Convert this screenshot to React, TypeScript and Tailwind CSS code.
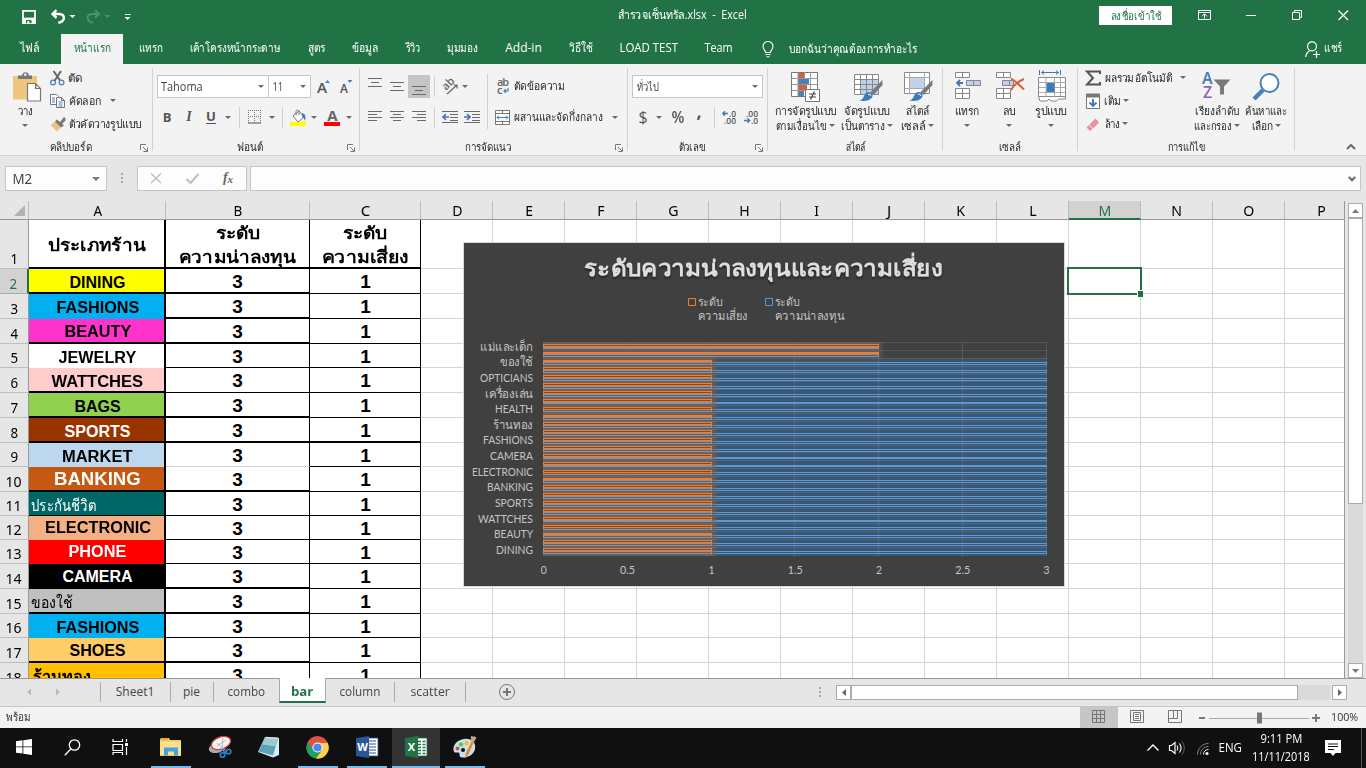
import { useLayoutEffect, useRef, useState, type ReactNode } from "react";

/* One line of text squeezed or stretched to a fixed width. */
function Fit({ w, className = "", children }: { w: number; className?: string; children: ReactNode }) {
  const ref = useRef<HTMLSpanElement>(null);
  const [scale, setScale] = useState(1);
  useLayoutEffect(() => {
    if (ref.current && ref.current.offsetWidth > 0) setScale(w / ref.current.offsetWidth);
  }, [w]);
  return (
    <span className={`inline-flex shrink-0 justify-center whitespace-nowrap ${className}`} style={{ width: w }}>
      <span ref={ref} className="shrink-0" style={{ transform: `scaleX(${scale})` }}>
        {children}
      </span>
    </span>
  );
}

const Caret = ({ className = "text-[#6a6a6a]" }: { className?: string }) => (
  <svg viewBox="0 0 6 3" className={`h-[3px] w-[6px] shrink-0 ${className}`}>
    <path d="M0 0h6L3 3z" fill="currentColor" />
  </svg>
);

const Cell = ({ className = "w-[22px]", children }: { className?: string; children: ReactNode }) => (
  <div className={`flex h-full shrink-0 items-center justify-center ${className}`}>{children}</div>
);

const Sep = ({ className = "h-[21px]" }: { className?: string }) => <div className={`w-px shrink-0 bg-[#d0d0d0] ${className}`} />;

function Lines({ rows }: { rows: [number, number][] }) {
  return (
    <svg viewBox="0 0 15 14" className="h-[14px] w-[15px]" shapeRendering="crispEdges">
      {rows.map(([x, w], i) => (
        <rect key={i} x={x} y={1 + i * (rows.length === 3 ? 4 : 3)} width={w} height="1" fill="#6a6a6a" />
      ))}
    </svg>
  );
}

/* ---------- title bar and tabs ---------- */

function TitleBar() {
  return (
    <div className="flex h-[34px] items-center text-white">
      <svg viewBox="0 0 135 34" className="h-[34px] w-[135px] shrink-0" fill="none">
        <path d="M23 10.800h12v12.200H23z" stroke="#fff" strokeWidth="1.800" />
        <path d="M23 17.600h12v5.400H23z" fill="#fff" />
        <path d="M26 20h5.500v3.200H26z" fill="#217346" />
        <path d="M27.300 21h2v2.500h-2z" fill="#fff" />
        <path d="M56.500 10.200 52.500 14l4 3.800M53 14h6.200c6.400.5 6.400 7.600-.9 8.800" stroke="#fff" strokeWidth="2.400" />
        <path d="M69.500 15h6l-3 3z" fill="#fff" />
        <path d="m95 10.200 4 3.800-4 3.800M98.500 14h-6.200c-6.400.5-6.400 7.600.9 8.800" stroke="#4f9070" strokeWidth="2" />
        <path d="M104.500 15h6l-3 3z" fill="#4f9070" />
        <path d="M125 14.500h5.500" stroke="#fff" />
        <path d="M124.500 17h6l-3 3z" fill="#fff" />
      </svg>
      <div className="mb-[4px] ml-[483px] flex h-[30px] items-center text-[12px]">
        <Fit w={129}>สำรวจเซ็นทรัล.xlsx&nbsp; -&nbsp; Excel</Fit>
      </div>
      <div className="mb-[3px] ml-[352px] flex h-[19px] w-[73px] items-center justify-center bg-white text-[11.500px] font-medium text-[#217346]">
        <Fit w={51}>ลงชื่อเข้าใช้</Fit>
      </div>
      <svg viewBox="1172 0 194 34" className="h-[34px] w-[194px] shrink-0" fill="none" stroke="#fff">
        <path d="M1198.500 10.500h12v9h-12zM1198.500 12.500h12M1204.500 18.500v-4.500m-2.500 2.300 2.500-2.500 2.500 2.500" />
        <path d="M1246 15.500h10" />
        <path d="M1292.500 12.500h7v7h-7zM1294.500 12.500v-2h7v7h-2" />
        <path d="m1338.500 10.500 9.500 9.500m0-9.500-9.500 9.500" strokeWidth="1.200" />
      </svg>
    </div>
  );
}

const TABS: [string, number][] = [
  ["แทรก", 24],
  ["เค้าโครงหน้ากระดาษ", 91],
  ["สูตร", 18],
  ["ข้อมูล", 26],
  ["รีวิว", 15],
  ["มุมมอง", 31],
  ["Add-in", 37],
  ["วิธีใช้", 24],
  ["LOAD TEST", 58],
  ["Team", 28],
];

function Tabs() {
  return (
    <div className="flex h-[30px] items-center text-[12px] text-white">
      <Fit w={19} className="mb-[2px] ml-[20px]">ไฟล์</Fit>
      <div className="ml-[22px] flex h-full w-[62px] items-center justify-center bg-[#f3f3f3] pb-[2px] font-medium text-[#217346]">
        <Fit w={37}>หน้าแรก</Fit>
      </div>
      <div className="mb-[2px] ml-[15px] flex gap-[27px]">
        {TABS.map(([name, w]) => (
          <Fit key={name} w={w}>{name}</Fit>
        ))}
      </div>
      <svg viewBox="0 0 12 17" className="ml-[29px] h-[17px] w-[12px] shrink-0" fill="none" stroke="#fff" strokeWidth="1.100">
        <path d="M3.500 11.500C3.500 9 1 8.500 1 5.500a5 5 0 0 1 10 0c0 3-2.500 3.500-2.500 6zM3.500 13.500h5M4.500 15.800h3" />
      </svg>
      <Fit w={129} className="ml-[14px]">บอกฉันว่าคุณต้องการทำอะไร</Fit>
      <svg viewBox="0 0 15 17" className="ml-[388px] h-[17px] w-[15px] shrink-0" fill="none" stroke="#fff" strokeWidth="1.200">
        <circle cx="7" cy="5.300" r="4.500" />
        <path d="M.7 16c.3-3 1.700-5 4-6.300M8 13.500h7M11.500 10v7" />
      </svg>
      <Fit w={18} className="mb-[2px] ml-[4px]">แชร์</Fit>
    </div>
  );
}

/* ---------- ribbon ---------- */

function Group({ className, label, labelW, launcher, children }: { className: string; label: string; labelW: number; launcher?: boolean; children: ReactNode }) {
  return (
    <div className={`flex shrink-0 ${className}`}>
      <div className="flex min-w-0 flex-1 flex-col">
        <div className="flex h-[75px]">{children}</div>
        <div className="flex h-[16px] items-center">
          <div className="flex flex-1 justify-center">
            <Fit w={labelW}>{label}</Fit>
          </div>
          {launcher && (
            <svg viewBox="0 0 8 8" className="mr-[4px] mt-[2px] h-[8px] w-[8px] shrink-0" fill="none" stroke="#777">
              <path d="M.5 6V.5H6M3 3l4 4M7.500 3.500v4h-4" />
            </svg>
          )}
        </div>
      </div>
      <div className="mt-[4px] h-[83px] w-px bg-[#d2d2d2]" />
    </div>
  );
}

function BigButton({ className, icon, line1, w1, line2, w2 }: { className: string; icon: ReactNode; line1: string; w1: number; line2?: string; w2?: number }) {
  return (
    <div className={`flex shrink-0 flex-col items-center pt-[6px] ${className}`}>
      <div className="flex h-[33px] items-center justify-center">{icon}</div>
      <div className="flex h-[15px] items-center">
        <Fit w={w1}>{line1}</Fit>
      </div>
      <div className="flex h-[15px] items-center gap-[2px]">
        {line2 && <Fit w={w2 ?? 0}>{line2}</Fit>}
        <Caret />
      </div>
    </div>
  );
}

const Brush = () => (
  <g>
    <path d="M28.500 9v5l-9 10-3-3z" fill="#7a7a7a" />
    <path d="M5 29.500c6-1 4-7.500 9.500-8.500 3-.5 5 3 3.500 5.500-2.500 3.500-8 4-13 3z" fill="#3f7ab8" />
    <path d="M14 23.500c2-1 3 .5 2.500 1.500" stroke="#fff" fill="none" />
  </g>
);

function Ribbon() {
  return (
    <div className="flex h-[92px] border-b border-[#d2d2d2] bg-[#f3f3f3] text-[11.500px] leading-none text-[#262626]">
      <Group className="w-[153px]" label="คลิปบอร์ด" labelW={42} launcher>
        <div className="flex w-[50px] flex-col items-center pt-[7px]">
          <svg viewBox="0 0 30 32" className="ml-[4px] h-[32px] w-[30px]">
            <path d="M1 5h24v23.500H1z" fill="#eec77c" />
            <path d="M6 8V4.500h4C10.500 0 16.500 0 17 4.500h3V8z" fill="#777" />
            <circle cx="13.300" cy="3.800" r="1.200" fill="#fff" />
            <path d="M15.500 12.500h8l5 5v12.500h-13zM23.500 12.500v5h5" fill="#fff" stroke="#777" strokeWidth="1.200" />
          </svg>
          <div className="flex h-[15px] items-center">
            <Fit w={15}>วาง</Fit>
          </div>
          <div className="flex h-[15px] items-center">
            <Caret />
          </div>
        </div>
        <div className="flex flex-col pt-[2px]">
          <div className="flex h-[23px] items-center">
            <svg viewBox="0 0 16 16" className="h-[16px] w-[16px]" fill="none">
              <path d="m3.500 1 7 10M11 1 4.500 11" stroke="#666" strokeWidth="2" />
              <circle cx="3" cy="12.500" r="2.400" stroke="#4a80b8" strokeWidth="1.200" />
              <circle cx="11.500" cy="12.500" r="2.400" stroke="#4a80b8" strokeWidth="1.200" />
            </svg>
            <Fit w={14} className="ml-[2px]">ตัด</Fit>
          </div>
          <div className="flex h-[23px] items-center">
            <svg viewBox="0 0 16 16" className="h-[16px] w-[16px]" fill="#fff" stroke="#777">
              <path d="M.5 1.500h6l2 2v8h-8z" />
              <path d="M6.500 4.500h5l3 3v7h-8zM11.500 4.500v3h3" />
              <path d="M2 5h3M2 7h3M2 9h3M8.500 9h4M8.500 11h4M8.500 13h4" stroke="#4a80b8" />
            </svg>
            <Fit w={33} className="ml-[2px]">คัดลอก</Fit>
            <div className="ml-[9px]"><Caret /></div>
          </div>
          <div className="flex h-[23px] items-center">
            <svg viewBox="0 0 16 16" className="h-[16px] w-[16px]">
              <path d="M.5 9 5 5.500l6 5.500-4 4.500z" fill="#eec08a" />
              <path d="m5 5.500 2-2 7 6-3 2z" fill="#777" />
              <path d="M9 7.500 14 1l1.500 1.500v2L11 9z" fill="#777" />
            </svg>
            <Fit w={73} className="ml-[2px]">ตัวคัดวางรูปแบบ</Fit>
          </div>
        </div>
      </Group>

      <Group className="w-[207px]" label="ฟอนต์" labelW={26} launcher>
        <div className="flex flex-col gap-[8px] pl-[4px] pt-[11px] text-[#444]">
          <div className="flex h-[23px] items-center">
            <div className="flex h-full w-[112px] items-center justify-between border border-[#c6c6c6] bg-white pl-[3px] pr-[4px] text-[12px]">
              <Fit w={42}>Tahoma</Fit>
              <Caret />
            </div>
            <div className="-ml-px flex h-full w-[43px] items-center justify-between border border-[#c6c6c6] bg-white pl-[3px] pr-[4px] text-[12px]">
              <Fit w={11} className="text-[#4b3f5c]">11</Fit>
              <Caret />
            </div>
            <svg viewBox="0 0 38 18" className="ml-[6px] h-[18px] w-[38px] overflow-visible">
              <text x="0" y="14.500" textLength="10" lengthAdjust="spacingAndGlyphs" className="text-[14px] font-semibold" fill="#555">A</text>
              <path d="M8 5h5l-2.500-3z" fill="#4a80b8" />
              <text x="23" y="14.500" className="text-[12px] font-semibold" fill="#555">A</text>
              <path d="M30.500 2h5l-2.500 3z" fill="#4a80b8" />
            </svg>
          </div>
          <div className="-ml-px flex h-[22px] items-center text-[13px] font-bold text-[#555]">
            <Cell>B</Cell>
            <Cell><i className="font-['Liberation_Serif'] text-[14px]">I</i></Cell>
            <Cell><span className="border-b border-[#555] pb-px leading-[11px]">U</span></Cell>
            <Cell className="w-[12px]"><Caret /></Cell>
            <Sep className="ml-[5px] h-[21px]" />
            <Cell className="ml-[2px] w-[25px]">
              <svg viewBox="0 0 13 14" className="h-[14px] w-[13px]" fill="none" stroke="#777">
                <path d="M0 .5h13M0 6.500h13M.5 0v13M6.500 0v13M12.500 0v13" strokeDasharray="1 1" />
                <path d="M0 13h13" stroke="#555" />
              </svg>
            </Cell>
            <Cell className="w-[9px]"><Caret /></Cell>
            <Sep className="ml-[6px] h-[21px]" />
            <Cell className="ml-[3px] w-[24px]">
              <svg viewBox="0 0 17 17" className="h-[17px] w-[17px]">
                <path d="m3 7 6-5 5 6-6 5z" fill="#fff" stroke="#777" />
                <path d="M6 6V2.500c0-2 3-2 3 0V6" fill="none" stroke="#777" />
                <path d="M12 4c4 1 4 4 3 8-1-3-2-3.500-3-4z" fill="#4a80b8" />
                <path d="M0 13h16v4H0z" fill="#ff0" />
              </svg>
            </Cell>
            <Cell className="w-[8px]"><Caret /></Cell>
            <Cell className="ml-[2px] w-[24px]">
              <svg viewBox="0 0 17 17" className="h-[17px] w-[17px] overflow-visible">
                <text x="8.500" y="12" textAnchor="middle" className="text-[15px] font-bold" fill="#666">A</text>
                <path d="M0 13h16v4H0z" fill="red" />
              </svg>
            </Cell>
            <Cell className="w-[9px]"><Caret /></Cell>
          </div>
        </div>
      </Group>

      <Group className="w-[268px]" label="การจัดแนว" labelW={46} launcher>
        <div className="flex w-[127px] flex-col gap-[8px] pl-[4px] pt-[11px]">
          <div className="flex h-[23px] items-center">
            <Cell><div className="mb-[5px]"><Lines rows={[[0, 14], [3, 8], [0, 14]]} /></div></Cell>
            <Cell><div className="mt-[3px]"><Lines rows={[[0, 14], [3, 8], [0, 14]]} /></div></Cell>
            <Cell className="w-[22px] bg-[#c5c5c5]"><div className="mt-[11px]"><Lines rows={[[0, 14], [3, 8], [0, 14]]} /></div></Cell>
            <Sep className="ml-[4px] h-[21px]" />
            <Cell className="ml-[3px] w-[23px]">
              <svg viewBox="0 0 18 17" className="h-[17px] w-[18px] overflow-visible">
                <text transform="translate(5 13) rotate(-45)" className="text-[11px] font-semibold" fill="#666">ab</text>
                <path d="m6 16 10-9M12.500 7H16v3.500" fill="none" stroke="#666" strokeWidth="1.200" />
              </svg>
            </Cell>
            <Cell className="w-[8px]"><Caret /></Cell>
          </div>
          <div className="flex h-[22px] items-center">
            <Cell><Lines rows={[[0, 14], [0, 9], [0, 14], [0, 9]]} /></Cell>
            <Cell><Lines rows={[[0, 14], [3, 8], [0, 14], [3, 8]]} /></Cell>
            <Cell><Lines rows={[[0, 14], [5, 9], [0, 14], [5, 9]]} /></Cell>
            <Sep className="ml-[4px] h-[21px]" />
            <Cell className="ml-[3px] w-[23px]">
              <svg viewBox="0 0 16 14" className="h-[14px] w-[16px]" fill="none" stroke="#6a6a6a">
                <path d="M0 1.500h16M8 4.500h8M8 7.500h8M8 10.500h8M0 12.500h16" />
                <path d="M7 7H1.500M4 4l-3 3 3 3" stroke="#3f7ab8" strokeWidth="1.700" />
              </svg>
            </Cell>
            <Cell>
              <svg viewBox="0 0 16 14" className="h-[14px] w-[16px]" fill="none" stroke="#6a6a6a">
                <path d="M0 1.500h16M8 4.500h8M8 7.500h8M8 10.500h8M0 12.500h16" />
                <path d="M0 7h5.500M3 4l3 3-3 3" stroke="#3f7ab8" strokeWidth="1.700" />
              </svg>
            </Cell>
          </div>
        </div>
        <Sep className="mt-[10px] h-[55px]" />
        <div className="flex flex-col gap-[8px] pl-[5px] pt-[11px]">
          <div className="flex h-[23px] items-center">
            <Cell className="w-[20px]">
              <svg viewBox="0 0 14 17" className="h-[17px] w-[14px] overflow-visible">
                <text x="1" y="8" className="text-[11px] font-semibold" fill="#666" textLength="12">ab</text>
                <text x="1" y="16" className="text-[11px] font-semibold" fill="#666">c</text>
                <path d="M12 10v3H8M9.800 11.200 8 13l1.800 1.800" fill="none" stroke="#3f7ab8" strokeWidth="1.200" />
              </svg>
            </Cell>
            <Fit w={51} className="mb-[2px] ml-px">ตัดข้อความ</Fit>
          </div>
          <div className="flex h-[22px] items-center">
            <Cell className="w-[20px]">
              <svg viewBox="0 0 15 15" className="mr-px h-[15px] w-[15px]" fill="none" stroke="#777">
                <path d="M.5.5h14v14H.500zM.5 3.500h14M.5 11.500h14M7.500.5v3M7.500 11.500v3" fill="#fff" />
                <path d="M2 7.500h11M4 5.500l-2 2 2 2M11 5.500l2 2-2 2" stroke="#3f7ab8" />
              </svg>
            </Cell>
            <Fit w={89} className="ml-px">ผสานและจัดกึ่งกลาง</Fit>
            <div className="ml-[9px]"><Caret /></div>
          </div>
        </div>
      </Group>

      <Group className="w-[140px]" label="ตัวเลข" labelW={27} launcher>
        <div className="flex flex-col gap-[8px] pl-[4px] pt-[11px] text-[#444]">
          <div className="flex h-[23px] w-[131px] items-center justify-between border border-[#c6c6c6] bg-white pl-[3px] pr-[4px]">
            <Fit w={22}>ทั่วไป</Fit>
            <Caret />
          </div>
          <div className="flex h-[22px] items-center text-[16px] text-[#555]">
            <Cell>$</Cell>
            <Cell className="w-[10px]"><Caret /></Cell>
            <Cell className="ml-[3px] w-[22px]"><Fit w={13} className="font-semibold">%</Fit></Cell>
            <Cell className="w-[20px]"><span className="mb-[13px] text-[18px] font-bold">,</span></Cell>
            <Sep className="ml-[5px] h-[21px]" />
            <Cell className="ml-[3px] w-[22px]">
              <svg viewBox="0 0 15 14" className="h-[14px] w-[15px] overflow-visible">
                <text x="7" y="6.500" textLength="7" className="text-[8.500px] font-semibold" fill="#555">.0</text>
                <text x="2" y="14" textLength="12" className="text-[8.500px] font-semibold" fill="#555">.00</text>
                <path d="M6 3.500H1M3 1.200.800 3.500 3 5.800" fill="none" stroke="#3f7ab8" strokeWidth="1.400" />
              </svg>
            </Cell>
            <Cell className="w-[23px]">
              <svg viewBox="0 0 15 14" className="h-[14px] w-[15px] overflow-visible">
                <text x="2" y="6.500" textLength="12" className="text-[8.500px] font-semibold" fill="#555">.00</text>
                <text x="7" y="14" textLength="7" className="text-[8.500px] font-semibold" fill="#555">.0</text>
                <path d="M0 10.500h5M3.500 8.200l2.200 2.300-2.200 2.300" fill="none" stroke="#3f7ab8" strokeWidth="1.400" />
              </svg>
            </Cell>
          </div>
        </div>
      </Group>

      <Group className="w-[175px]" label="สไตล์" labelW={20}>
        <BigButton
          className="ml-[4px] w-[66px]"
          line1="การจัดรูปแบบ" w1={62} line2="ตามเงื่อนไข" w2={51}
          icon={
            <svg viewBox="0 0 30 31" className="h-[31px] w-[30px]" fill="#fff" stroke="#777">
              <path d="M1.500 1.500h26v24h-26z" />
              <path d="M8 2h6v5H8zM8 14h9v5H8z" fill="#d35f3b" stroke="none" />
              <path d="M8 8h11v5H8zM8 20h6v5H8z" fill="#4a80b8" stroke="none" />
              <path d="M1.500 7.500h26M1.500 13.500h26M1.500 19.500h26M8 1v24M20.500 1v24M14.500 1v6" fill="none" stroke="#999" />
              <path d="M15.500 18.500h14v12h-14z" />
              <path d="M19 23h7M19 26h7M24.500 20.500l-4 8" stroke="#444" strokeWidth="1.200" />
            </svg>
          }
        />
        <BigButton
          className="w-[58px]"
          line1="จัดรูปแบบ" w1={46} line2="เป็นตาราง" w2={44}
          icon={
            <svg viewBox="0 0 30 31" className="ml-[4px] h-[31px] w-[30px]" fill="none" stroke="#888">
              <path d="M.5 3.500h24v20H.5z" fill="#fff" />
              <path d="M7 9h17v14H7z" fill="#bfd2ea" stroke="none" />
              <path d="M.5 8.500h24M.5 13.500h24M.5 18.500h24M6.500 3.500v20M12.500 3.500v20M18.500 3.500v20" />
              <g stroke="none"><Brush /></g>
            </svg>
          }
        />
        <BigButton
          className="w-[42px]"
          line1="สไตล์" w1={24} line2="เซลล์" w2={25}
          icon={
            <svg viewBox="0 0 30 31" className="ml-[4px] h-[31px] w-[30px]" fill="none" stroke="#888">
              <path d="M.5 1.500h25v21H.5z" fill="#fff" />
              <path d="M.5 6.500h25M.5 17.500h25M5.500 1.500v21M20.500 1.500v21" stroke="#aaa" />
              <path d="M6 7h14v10H6z" fill="#bfd2ea" stroke="none" />
              <g stroke="none"><Brush /></g>
            </svg>
          }
        />
      </Group>

      <Group className="w-[135px]" label="เซลล์" labelW={22}>
        <BigButton
          className="ml-[3px] w-[42px]"
          line1="แทรก" w1={25}
          icon={
            <svg viewBox="0 0 26 29" className="mb-[2px] ml-[2px] h-[29px] w-[26px]" fill="#fff" stroke="#888">
              <path d="M.5 1.500h14v5H.5zM7.500 1.500v5" />
              <path d="M11.500 9.500h14v5h-14zM18.500 9.500v5" fill="#bfd2ea" />
              <path d="M.5 17.500h14v10H.5zM.5 22.500h14M7.500 17.500v10" />
              <path d="M8 12H2M5 9l-3 3 3 3" fill="none" stroke="#3f7ab8" strokeWidth="1.800" />
            </svg>
          }
        />
        <BigButton
          className="w-[42px]"
          line1="ลบ" w1={13}
          icon={
            <svg viewBox="0 0 30 29" className="mb-[2px] ml-[3px] h-[29px] w-[30px]" fill="#fff" stroke="#888">
              <path d="M.5 1.500h14v5H.5zM7.500 1.500v5" />
              <path d="M6.500 9.500h11v5h-11zM13.500 9.500v5" fill="#bfd2ea" />
              <path d="M.5 17.500h14v10H.5zM.5 22.500h14M7.500 17.500v10" />
              <path d="M15 7.500c5 3 9 7 13 11M28 8c-5 2-10 6-13 11" fill="none" stroke="#d9603b" strokeWidth="2" />
            </svg>
          }
        />
        <BigButton
          className="w-[42px]"
          line1="รูปแบบ" w1={32}
          icon={
            <svg viewBox="0 0 29 32" className="mb-px ml-[3px] h-[32px] w-[29px]" fill="#fff" stroke="#888">
              <path d="M.5 7.500h27v19H.500zM.5 26.500h27v2.500l-7 0-2 2H13l-2-2-2 2H2z" />
              <path d="M.5 12.500h27M.5 22.500h27M8 7.500v19M16.500 7.500v19M22.500 7.500v19M.5 17.500H8M16.500 17.500h11" fill="none" stroke="#aaa" />
              <path d="M8.500 13h8v9h-8z" fill="#3f7ab8" stroke="none" />
              <path d="M1.500 0v5M22.500 0v5M3.500 2.500h17M6 .5l-2.500 2L6 4.500M18 .5l2.500 2-2.500 2" fill="none" stroke="#3f7ab8" />
            </svg>
          }
        />
      </Group>

      <Group className="w-[217px]" label="การแก้ไข" labelW={38}>
        <div className="flex w-[114px] flex-col pl-[7px] pt-[2px]">
          <div className="flex h-[23px] items-center">
            <svg viewBox="0 0 16 16" className="h-[16px] w-[16px]">
              <path d="M15 4V1.500H2L8 8l-6 6.500h13V12" fill="none" stroke="#555" strokeWidth="2" />
            </svg>
            <Fit w={68} className="ml-[3px]">ผลรวมอัตโนมัติ</Fit>
            <div className="ml-[8px]"><Caret /></div>
          </div>
          <div className="flex h-[23px] items-center">
            <svg viewBox="0 0 16 16" className="h-[16px] w-[16px]" fill="#fff" stroke="#777">
              <path d="M1.500 1.500h13v14h-13z" />
              <path d="M1.500 1h13v3h-13z" fill="#777" />
              <path d="M8 6v7M4.500 9.500 8 13l3.500-3.500" fill="none" stroke="#3f7ab8" strokeWidth="1.900" />
            </svg>
            <Fit w={17} className="ml-[3px]">เติม</Fit>
            <div className="ml-[2px]"><Caret /></div>
          </div>
          <div className="flex h-[23px] items-center">
            <svg viewBox="0 0 16 16" className="h-[16px] w-[16px]">
              <path d="m4.500 8.500 6-6 3.500 4-6 6z" fill="#e8909f" />
              <path d="M1.500 11.500 4 9l3.500 4-2.500 2z" fill="#e8909f" />
            </svg>
            <Fit w={16} className="ml-[3px]">ล้าง</Fit>
            <div className="ml-[2px]"><Caret /></div>
          </div>
        </div>
        <BigButton
          className="w-[50px]"
          line1="เรียงลำดับ" w1={44} line2="และกรอง" w2={38}
          icon={
            <svg viewBox="0 0 30 31" className="h-[31px] w-[30px] overflow-visible">
              <text x="0" y="13" className="text-[16px] font-semibold" fill="#3f7ab8">A</text>
              <text x="1" y="27" className="text-[16px] font-semibold" fill="#9162b8">Z</text>
              <path d="M11.500 8.500h17l-6.500 7v8h-4v-8z" fill="#7a7a7a" />
            </svg>
          }
        />
        <BigButton
          className="w-[48px]"
          line1="ค้นหาและ" w1={42} line2="เลือก" w2={22}
          icon={
            <svg viewBox="0 0 28 30" className="mr-px h-[30px] w-[28px]">
              <path d="m2 27 9-9" stroke="#4a80b8" strokeWidth="4.500" />
              <circle cx="17.500" cy="11" r="9" fill="#fff" stroke="#4a80b8" strokeWidth="2" />
            </svg>
          }
        />
      </Group>
      <div className="flex flex-1 items-end justify-end pb-[5px] pr-[10px]">
        <svg viewBox="0 0 10 6" className="h-[6px] w-[10px]" fill="none" stroke="#6a6a6a" strokeWidth="2">
          <path d="m1 5 4-4 4 4" />
        </svg>
      </div>
    </div>
  );
}

/* ---------- formula bar ---------- */

function FormulaBar() {
  return (
    <div className="flex h-[45px] bg-[#e6e6e6] pl-[5px] pt-[10px]">
      <div className="flex h-[25px] w-[102px] items-center justify-between border border-[#c6c6c6] bg-[#fdfdfd] pl-[6px] pr-[6px] font-['Noto_Sans'] text-[14px] text-[#444]">
        <Fit w={20}>M2</Fit>
        <svg viewBox="0 0 8 4" className="h-[4px] w-[8px]"><path d="M0 0h8L4 4z" fill="#777" /></svg>
      </div>
      <div className="ml-[14px] mt-[7px] flex flex-col gap-[2px]">
        <div className="h-[2px] w-[2px] bg-[#aaa]" />
        <div className="h-[2px] w-[2px] bg-[#aaa]" />
        <div className="h-[2px] w-[2px] bg-[#aaa]" />
      </div>
      <div className="ml-[14px] flex h-[25px] w-[110px] items-center border border-[#c6c6c6] bg-[#fdfdfd]">
        <svg viewBox="0 0 108 23" className="h-[23px] w-[108px]" fill="none">
          <path d="m13 6.500 10 9.500M23 6.500 13 16" stroke="#c0c0c0" strokeWidth="1.600" />
          <path d="m48.500 12 4 4 8-9" stroke="#c0c0c0" strokeWidth="2.200" />
          <text x="85" y="15" className="font-['Liberation_Serif'] text-[14px] font-bold italic" fill="#666">f</text>
          <text x="89.500" y="15.500" className="font-['Liberation_Serif'] text-[11px] font-bold italic" fill="#666">x</text>
        </svg>
      </div>
      <div className="ml-[3px] flex h-[25px] w-[1111px] items-center justify-end border border-[#c6c6c6] bg-[#fdfdfd] pr-[4px]">
        <svg viewBox="0 0 8 6" className="h-[6px] w-[8px]" fill="none" stroke="#6a6a6a" strokeWidth="2.200">
          <path d="m.8 1 3.200 3.200L7.200 1" />
        </svg>
      </div>
    </div>
  );
}

/* ---------- worksheet ---------- */

type Row = {
  h: string;
  a: string;
  w: number;
  fill: string;
  b?: string;
  c?: string;
};

const THIN = "border-b border-b-black";
const THICK = "border-b-2 border-b-black";

const ROWS: Row[] = [
  { h: "h-[25px]", a: "DINING", w: 56, fill: `bg-[#ffff00] pt-[4px] ${THICK}`, b: THICK },
  { h: "h-[25px]", a: "FASHIONS", w: 83, fill: "bg-[#00b0f0] pt-[3px]", b: THICK },
  { h: "h-[25px]", a: "BEAUTY", w: 67, fill: `bg-[#ff33cc] pt-[3px] ${THICK}`, b: THICK },
  { h: "h-[24px]", a: "JEWELRY", w: 78, fill: "bg-white pt-[3px]" },
  { h: "h-[25px]", a: "WATTCHES", w: 92, fill: `bg-[#ffcccc] pt-[4px] ${THICK}` },
  { h: "h-[25px]", a: "BAGS", w: 46, fill: `bg-[#92d050] pt-[4px] ${THICK}`, b: THICK },
  { h: "h-[25px]", a: "SPORTS", w: 66, fill: `bg-[#993300] pt-[4px] text-white ${THICK}`, b: THICK, c: THICK },
  { h: "h-[24px]", a: "MARKET", w: 70, fill: "bg-[#bdd7ee] pt-[3px]", b: "border-b border-b-[#d4d4d4]" },
  { h: "h-[25px]", a: "BANKING", w: 87, fill: `bg-[#c65911] text-[19px] text-white ${THICK}`, b: THICK },
  { h: "h-[24px]", a: "ประกันชีวิต", w: 65, fill: `justify-start! pl-[2px] pt-[5px] bg-[#006666] font-normal! text-[15px] text-white ${THIN}` },
  { h: "h-[24px]", a: "ELECTRONIC", w: 106, fill: "bg-[#f4b084]" },
  { h: "h-[24px]", a: "PHONE", w: 58, fill: "bg-[#ff0000] text-white" },
  { h: "h-[25px]", a: "CAMERA", w: 70, fill: "bg-black text-white", b: THICK },
  { h: "h-[25px]", a: "ของใช้", w: 42, fill: `justify-start! pl-[2px] pt-[4px] bg-[#c0c0c0] font-normal! text-[15px] ${THICK}`, b: THICK },
  { h: "h-[24px]", a: "FASHIONS", w: 83, fill: "bg-[#00b0f0] pt-[3px]" },
  { h: "h-[25px]", a: "SHOES", w: 56, fill: `bg-[#ffcc66] pt-[3px] ${THICK}`, b: THICK },
  { h: "h-[25px]", a: "ร้านทอง", w: 59, fill: "justify-start! pl-[3px] pt-[3px] bg-[#ffc000]" },
];

const COLS = ["D", "E", "F", "G", "H", "I", "J", "K", "L", "M", "N", "O", "P"];

function Blank() {
  return (
    <>
      {COLS.map((c) => (
        <div key={c} className={`shrink-0 border-b border-[#d4d4d4] ${c === "P" ? "w-[60px]" : "w-[72px] border-r"}`} />
      ))}
    </>
  );
}

function RowHead({ n, active }: { n: number; active?: boolean }) {
  return (
    <div
      className={`flex w-[29px] shrink-0 items-end justify-center border-b font-['Noto_Sans'] text-[15px] font-normal leading-[20px] ${
        active ? "border-b-[#ababab] border-r-2 border-r-[#217346] bg-[#d2d2d2] text-[#217346]" : "border-b-[#bdbdbd] border-r border-r-[#999] bg-[#e6e6e6] text-black"
      }`}
    >
      <Fit w={n > 9 ? 16 : 8}>{n}</Fit>
    </div>
  );
}

function Sheet() {
  return (
    <div className="flex h-[477px] bg-[#e6e6e6]">
      <div className="relative flex w-[1345px] shrink-0 flex-col overflow-hidden border-r border-[#999]">
        <div className="flex h-[19px] shrink-0 border-b border-[#999] bg-[#e6e6e6] font-['Noto_Sans'] text-[15px] leading-none text-black">
          <div className="flex w-[29px] shrink-0 items-end justify-end border-r border-[#bbb] pb-[3px] pr-[3px]">
            <svg viewBox="0 0 11 11" className="h-[11px] w-[11px]"><path d="M11 0v11H0z" fill="#b2b2b2" /></svg>
          </div>
          <div className="flex w-[137px] shrink-0 items-center justify-center border-r border-[#bbb] pl-px"><Fit w={9}>A</Fit></div>
          <div className="flex w-[144px] shrink-0 items-center justify-center border-r border-[#bbb] pl-px"><Fit w={9}>B</Fit></div>
          <div className="flex w-[111px] shrink-0 items-center justify-center border-r border-[#bbb] pl-px"><Fit w={9}>C</Fit></div>
          {COLS.map((c) => (
            <div
              key={c}
              className={`flex w-[72px] shrink-0 items-center justify-center pl-px ${
                c === "M" ? "h-[19px] border-b-2 border-r border-b-[#217346] border-r-[#bbb] bg-[#d2d2d2] pt-px text-[#217346]" : c === "P" ? "" : "border-r border-[#bbb]"
              }`}
            >
              <span className={c === "J" ? "" : "scale-x-[.94]"}>{c}</span>
            </div>
          ))}
        </div>

        <div className="flex h-[49px] shrink-0 bg-white">
          <RowHead n={1} />
          <div className="flex w-[137px] shrink-0 items-center justify-center border-b-2 border-r-2 border-black pl-px pt-[2px] font-['Noto_Sans'] text-[17px] font-bold leading-none">
            <Fit w={98}>ประเภทร้าน</Fit>
          </div>
          <div className="flex w-[144px] shrink-0 flex-col items-center justify-center border-b-2 border-r border-black pt-[2px] font-['Noto_Sans'] text-[17px] font-bold leading-[24px]">
            <Fit w={45}>ระดับ</Fit>
            <Fit w={117}>ความน่าลงทุน</Fit>
          </div>
          <div className="flex w-[111px] shrink-0 flex-col items-center justify-center border-b-2 border-r border-black pt-[2px] font-['Noto_Sans'] text-[17px] font-bold leading-[24px]">
            <Fit w={45}>ระดับ</Fit>
            <Fit w={87}>ความเสี่ยง</Fit>
          </div>
          <Blank />
        </div>

        {ROWS.map((r, i) => (
          <div key={i} className={`flex shrink-0 bg-white font-['Liberation_Sans'] font-bold leading-none ${r.h}`}>
            <RowHead n={i + 2} active={i === 0} />
            <div className={`flex w-[137px] shrink-0 items-center justify-center border-r-2 border-r-black pl-[2px] text-[16px] ${r.fill}`}>
              <Fit w={r.w}>{r.a}</Fit>
            </div>
            <div className={`flex w-[144px] shrink-0 items-center justify-center border-r border-r-black pt-px text-[19px] ${r.b ?? THIN}`}>3</div>
            <div className={`flex w-[111px] shrink-0 items-center justify-center border-r border-r-black pl-px pt-px text-[19px] ${r.c ?? THIN}`}>1</div>
            <Blank />
          </div>
        ))}

        <div className="absolute left-[463px] top-[41px]">
          <Chart />
        </div>
        <div className="absolute left-[1067px] top-[66px] h-[28px] w-[75px] border-2 border-[#217346]" />
        <div className="absolute left-[1137px] top-[89px] h-[7px] w-[6px] border-l border-t border-white bg-[#217346]" />
      </div>

      <div className="ml-[3px] mt-[2px] flex w-[15px] flex-col">
        <div className="flex h-[15px] items-center justify-center border border-[#ababab] bg-white">
          <svg viewBox="0 0 7 4" className="h-[4px] w-[7px]"><path d="M0 4h7L3.500 0z" fill="#777" /></svg>
        </div>
        <div className="h-[286px] border border-[#ababab] bg-white" />
        <div className="flex-1 bg-[#dadada]" />
        <div className="flex h-[15px] items-center justify-center border border-[#ababab] bg-white">
          <svg viewBox="0 0 7 4" className="h-[4px] w-[7px]"><path d="M0 0h7L3.500 4z" fill="#777" /></svg>
        </div>
      </div>
    </div>
  );
}

/* ---------- chart ---------- */

/* Top edge and height of each bar outline, from the top category down. */
const ORANGE: [number, number][] = [
  [344, 3], [352, 2], [360, 2], [367, 3], [375, 3], [383, 3], [391, 3], [399, 3], [407, 3],
  [415, 2], [422, 3], [430, 3], [438, 3], [446, 3], [454, 3], [462, 3], [470, 3], [478, 2],
  [485, 3], [493, 3], [501, 3], [509, 3], [517, 3], [525, 3], [533, 2], [540, 3], [548, 3],
];
const BLUE: [number, number][] = [
  [347, 2], [354, 3], [362, 3], [370, 3], [378, 3], [386, 3], [394, 3], [402, 2], [409, 3],
  [417, 3], [425, 3], [433, 3], [441, 3], [449, 3], [457, 2], [465, 2], [472, 3], [480, 3],
  [488, 3], [496, 3], [504, 3], [512, 3], [520, 2], [527, 3], [535, 3], [543, 3], [551, 3],
];

const CATEGORIES: [string, number][] = [
  ["แม่และเด็ก", 53], ["ของใช้", 33], ["OPTICIANS", 53], ["เครื่องเล่น", 48], ["HEALTH", 38], ["ร้านทอง", 40], ["FASHIONS", 50],
  ["CAMERA", 43], ["ELECTRONIC", 61], ["BANKING", 46], ["SPORTS", 38], ["WATTCHES", 55], ["BEAUTY", 39], ["DINING", 37],
];

const TICKS: [string, number][] = [["0", 6], ["0.5", 15], ["1", 6], ["1.5", 15], ["2", 6], ["2.5", 15], ["3", 6]];

function Chart() {
  return (
    <svg viewBox="463 242 602 345" className="block h-[345px] w-[602px] font-['Lato','Open_Sans',sans-serif]">
      <defs>
        <filter id="glow" x="-5%" y="-10%" width="110%" height="120%"><feGaussianBlur stdDeviation="2" /></filter>
        <filter id="drop" x="-5%" y="-20%" width="110%" height="150%"><feDropShadow dx="0" dy="2" stdDeviation="1.200" floodColor="#000" floodOpacity="0.500" /></filter>
        <clipPath id="plot"><path d="M543 342h504v214H543z" /></clipPath>
      </defs>
      <path d="M463.500 242.500h601v344h-601z" fill="#404040" stroke="#d9d9d9" />
      <text x="763.500" y="276" textAnchor="middle" textLength="359" lengthAdjust="spacingAndGlyphs" className="text-[22px] font-bold" fill="#dedede" filter="url(#drop)">
        ระดับความน่าลงทุนและความเสี่ยง
      </text>
      <g className="text-[12px]" fill="#c4c4c4">
        <path d="M688.500 298.500h7v7h-7z" fill="none" stroke="#ed7d31" />
        <text x="698" y="306" textLength="25" lengthAdjust="spacingAndGlyphs">ระดับ</text>
        <text x="698" y="320" textLength="50" lengthAdjust="spacingAndGlyphs">ความเสี่ยง</text>
        <path d="M765.500 298.500h7v7h-7z" fill="none" stroke="#5b9bd5" />
        <text x="775" y="306" textLength="25" lengthAdjust="spacingAndGlyphs">ระดับ</text>
        <text x="775" y="320" textLength="69" lengthAdjust="spacingAndGlyphs">ความน่าลงทุน</text>
        {CATEGORIES.map(([name, w], i) => (
          <text key={i} x={533 - w} y={350.600 + i * 15.640} textLength={w} lengthAdjust="spacingAndGlyphs">{name}</text>
        ))}
        {TICKS.map(([t, w], i) => (
          <text key={t} x={543.800 + i * 83.800 - w / 2} y="574" textLength={w} lengthAdjust="spacingAndGlyphs">{t}</text>
        ))}
      </g>
      <g clipPath="url(#plot)">
        <path d="M538 359h514v212H538z" fill="#3b566f" filter="url(#glow)" />
        <g stroke="#fff" strokeOpacity="0.110" shapeRendering="crispEdges">
          {ORANGE.map((_, i) => (
            <path key={i} d={`M543 ${342.500 + Math.round(i * 7.890)}h504`} />
          ))}
          {TICKS.map((t, i) => (
            <path key={t[0]} d={`M${543.500 + Math.round(i * 83.800)} 342v214`} />
          ))}
        </g>
        {BLUE.map(([y, h], i) => (
          <rect key={i} x="543.500" y={y + 0.500} width={i < 2 ? 335 : 503} height={h - 1} fill="none" stroke="#5b9bd5" shapeRendering="crispEdges" />
        ))}
        <g filter="url(#glow)" fill="#7f6250" fillOpacity="0.750">
          <path d="M530 332h351v26H715v210H530z" />
        </g>
        {BLUE.map(([y, h], i) => (
          <rect key={i} x="543.500" y={y + 0.500} width={i < 2 ? 335 : 168} height={h - 1} fill="none" stroke="#8494a6" shapeRendering="crispEdges" />
        ))}
        {ORANGE.map(([y, h], i) => (
          <rect key={i} x="543.500" y={y + 0.500} width={i < 2 ? 335 : 168} height={h - 1} fill="#7d4a2e" stroke="#ed7d31" shapeRendering="crispEdges" />
        ))}
      </g>
    </svg>
  );
}

/* ---------- sheet tabs and status bar ---------- */

function SheetTabs() {
  return (
    <div className="flex h-[29px] border-b border-[#c6c6c6] bg-[#e6e6e6] text-[12px] leading-none text-[#444]">
      <div className="flex flex-1 border-t border-[#999]">
        <svg viewBox="0 0 100 27" className="h-[27px] w-[100px] shrink-0" fill="#bbb">
          <path d="M31 9.500v7L27 13zM56 9.500v7l4-3.500z" />
        </svg>
        <div className="mt-[3px] flex h-[20px] items-center border-l border-[#ababab]">
          <div className="flex w-[69px] justify-center pr-px"><Fit w={39}>Sheet1</Fit></div>
          <div className="flex h-full w-[43px] items-center justify-center border-l border-[#ababab] pr-px"><Fit w={17}>pie</Fit></div>
          <div className="flex h-full w-[66px] items-center justify-center border-l border-[#ababab] pr-px"><Fit w={38}>combo</Fit></div>
        </div>
        <div className="-mt-px flex h-[25px] w-[47px] items-center justify-center border-x border-b-2 border-x-[#ababab] border-b-[#217346] bg-white pt-[4px] font-bold text-[#217346]">
          <Fit w={22}>bar</Fit>
        </div>
        <div className="mt-[3px] flex h-[20px] items-center">
          <div className="flex h-full w-[69px] items-center justify-center border-r border-[#ababab]"><Fit w={41}>column</Fit></div>
          <div className="flex h-full w-[71px] items-center justify-center border-r border-[#ababab]"><Fit w={39}>scatter</Fit></div>
        </div>
        <svg viewBox="0 0 17 17" className="ml-[33px] mt-[5px] h-[17px] w-[17px]" fill="none" stroke="#777">
          <circle cx="8" cy="8" r="7.500" />
          <path d="M8 4v8M4 8h8" strokeWidth="2" />
        </svg>
        <div className="ml-[303px] mt-[8px] flex flex-col gap-[2px]">
          <div className="h-[2px] w-[2px] bg-[#aaa]" />
          <div className="h-[2px] w-[2px] bg-[#aaa]" />
          <div className="h-[2px] w-[2px] bg-[#aaa]" />
        </div>
        <div className="ml-[15px] mt-[6px] flex h-[15px]">
          <div className="flex w-[15px] items-center justify-center border border-[#ababab] bg-white">
            <svg viewBox="0 0 4 7" className="h-[7px] w-[4px]"><path d="M4 0v7L0 3.500z" fill="#666" /></svg>
          </div>
          <div className="w-[447px] border border-[#ababab] bg-white" />
          <div className="w-[32px] bg-[#dadada]" />
          <div className="ml-[2px] flex w-[15px] items-center justify-center border border-[#ababab] bg-white">
            <svg viewBox="0 0 4 7" className="h-[7px] w-[4px]"><path d="M0 0v7l4-3.500z" fill="#666" /></svg>
          </div>
        </div>
      </div>
    </div>
  );
}

function StatusBar() {
  return (
    <div className="flex h-[21px] items-center bg-[#f3f3f3] text-[11.500px] leading-none text-[#333]">
      <Fit w={25} className="mb-[2px] ml-[6px]">พร้อม</Fit>
      <div className="ml-[1049px] flex h-full w-[38px] items-center justify-center bg-[#c6c6c6] pr-px">
        <svg viewBox="0 0 13 13" className="mb-[2px] h-[13px] w-[13px]" fill="none" stroke="#777">
          <path d="M.5.5h12v12H.5zM.5 4.500h12M.5 8.500h12M4.500.5v12M8.500.5v12" />
        </svg>
      </div>
      <svg viewBox="0 0 52 13" className="mb-[2px] ml-[12px] h-[13px] w-[52px] shrink-0" fill="none" stroke="#777">
        <path d="M.5.5h13v12H.5zM3.500 2.500h7v8h-7zM5 4.500h4M5 6.500h4M5 8.500h4" />
        <path d="M38.500.5h13v12h-13zM38.500 8.500H47.500V.5M43.500.5v8" />
      </svg>
      <svg viewBox="1182 0 140 20" className="h-[20px] w-[140px] shrink-0">
        <path d="M1199 9h6v2h-6zM1312 9h8v2h-8zM1315 6h2v8h-2z" fill="#777" />
        <path d="M1209 10.500h100" stroke="#aaa" />
        <path d="M1257 4.500h5v11h-5z" fill="#777" />
      </svg>
      <Fit w={27} className="mb-px ml-[9px]">100%</Fit>
    </div>
  );
}

/* ---------- taskbar ---------- */

function Task({ open, active, children }: { open?: boolean; active?: boolean; children: ReactNode }) {
  return (
    <div className={`flex w-[48px] flex-col items-center ${active ? "bg-[#333]" : ""}`}>
      <div className="flex h-[38px] items-center">{children}</div>
      {open && <div className={`h-[2px] bg-[#76b9ed] ${active ? "w-[48px]" : "w-[40px]"}`} />}
    </div>
  );
}

function OfficeIcon({ letter, color, word }: { letter: string; color: string; word?: boolean }) {
  return (
    <svg viewBox="0 0 24 24" className="h-[24px] w-[24px]">
      <path d="M12 3h11v18H12z" fill="#fff" stroke={color} strokeWidth=".8" />
      {word ? (
        <path d="M14 6h7M14 9h7M14 12h7M14 15h7M14 18h7" stroke={color} strokeWidth="1.200" />
      ) : (
        <path d="M14 6.500h3M18.500 6.500h3M14 9.500h3M18.500 9.500h3M14 12.500h3M18.500 12.500h3M14 15.500h3M18.500 15.500h3M14 18.500h3M18.500 18.500h3" stroke={color} strokeWidth="1.700" />
      )}
      <path d="M1 3 14 1v22L1 21z" fill={color} />
      <text x="7.500" y="16" textAnchor="middle" className="text-[11px] font-bold" fill="#fff">{letter}</text>
    </svg>
  );
}

function Taskbar() {
  return (
    <div className="flex h-[40px] bg-[#101010] text-white">
      <Task>
        <svg viewBox="0 0 16 16" className="h-[16px] w-[16px]" fill="#fff">
          <path d="M0 2.300 6.500 1.300v6.200H0zM7.300 1.200 16 0v7.500H7.300zM0 8.300h6.500v6.300L0 13.700zM7.300 8.300H16V16l-8.700-1.300z" />
        </svg>
      </Task>
      <Task>
        <svg viewBox="0 0 17 17" className="h-[17px] w-[17px]" fill="none" stroke="#fff" strokeWidth="1.300">
          <circle cx="10.500" cy="6" r="5.200" />
          <path d="m6.800 10-6 6.200" />
        </svg>
      </Task>
      <Task>
        <svg viewBox="0 0 17 16" className="h-[16px] w-[17px]" fill="none" stroke="#fff" strokeWidth="1.200">
          <path d="M1 0v2.500h9.500V0M1 5.500h9.500v6H1zM1 16v-2.500h9.500V16M14.500 0v3M14.500 8v8" />
          <path d="M13 4h3v3h-3z" fill="#fff" stroke="none" />
        </svg>
      </Task>
      <div className="ml-[3px] flex gap-px">
        <Task open>
          <svg viewBox="0 0 22 20" className="h-[20px] w-[22px]">
            <path d="M0 2.500 1 1h8l1 2h11v16H0z" fill="#f0c95c" />
            <path d="M0 4.500h21V18H0z" fill="#fbe08d" />
            <path d="M2 1h6v2H2z" fill="#e0a93a" />
            <path d="M4 18.500v-8h14v8h-4v-4H8v4z" fill="#3fa4e0" />
          </svg>
        </Task>
        <Task>
          <svg viewBox="0 0 24 24" className="h-[24px] w-[24px]">
            <ellipse cx="10" cy="12" rx="9.500" ry="5.500" fill="#aaa" transform="rotate(-20 10 12)" />
            <ellipse cx="13" cy="8" rx="10" ry="6" fill="#f5f5f5" stroke="#d23b3b" strokeWidth="1.300" transform="rotate(-20 13 8)" />
            <path d="m9 8 9 8M15 3l-1 11M9 11l9-6" stroke="#b9b9b9" />
            <circle cx="14.500" cy="20" r="2.300" fill="none" stroke="#2288cc" strokeWidth="1.600" />
            <circle cx="20.500" cy="16.500" r="2.300" fill="none" stroke="#2288cc" strokeWidth="1.600" />
            <path d="m14 14 3 4 2-3" stroke="#2288cc" strokeWidth="1.600" fill="none" />
          </svg>
        </Task>
        <Task>
          <svg viewBox="0 0 24 22" className="h-[22px] w-[24px]">
            <path d="m8 1 14 1v17l-6 2.500L1 16z" fill="#d9eef2" />
            <path d="m8.500 1.500 12.500 1-5 17L1.500 15.500z" fill="#5ba3b5" />
            <path d="m8.500 1.500 12.500 1-2.500 8-13-2z" fill="#9ccbd8" />
            <path d="M8.500 1.500 21 2.300" stroke="#ddd" strokeWidth="1.500" />
          </svg>
        </Task>
        <Task open>
          <svg viewBox="0 0 24 24" className="mr-px h-[23px] w-[23px]">
            <circle cx="12" cy="12" r="11.500" fill="#de5145" />
            <path d="M2 6.300A11.500 11.500 0 0 0 10.500 23.400L16.500 14.500 12 12z" fill="#1da261" />
            <path d="M22.500 7H12l4.800 7.500-6.300 9A11.500 11.500 0 0 0 22.500 7z" fill="#fdd04e" />
            <path d="M2 6.300 7.300 14.500 12 7h10.500A11.500 11.500 0 0 0 2 6.300z" fill="#de5145" />
            <circle cx="12" cy="12" r="5.300" fill="#fff" />
            <circle cx="12" cy="12" r="4.300" fill="#4a8af4" />
          </svg>
        </Task>
        <Task open><OfficeIcon letter="W" color="#2a5699" word /></Task>
        <Task open active><OfficeIcon letter="X" color="#217346" /></Task>
        <Task open>
          <svg viewBox="0 0 24 24" className="h-[24px] w-[24px]">
            <path d="M11 4C4 5 0 10 .5 15c.5 4 3 2 5 2.500s0 3 2 4.500c4 2 13-1 14.500-8S18 3 11 4z" fill="#c3e3f2" />
            <circle cx="10" cy="15" r="2" fill="#101010" />
            <circle cx="4.500" cy="13.500" r="2" fill="#e0483e" />
            <circle cx="8" cy="9.500" r="2.200" fill="#6cc04a" />
            <circle cx="13.500" cy="8" r="2.200" fill="#f5b92d" />
            <path d="m12 23.500 1-6 6-12 2 1-5 12z" fill="#e88a2a" />
            <path d="M18 1c2 1 4 0 5.500 1.500-1 1-1 4-3.500 4.500-2-1-2.500-4-2-6z" fill="#cfa676" />
          </svg>
        </Task>
      </div>
      <svg viewBox="1146 0 66 40" className="ml-[657px] h-[40px] w-[66px] shrink-0" fill="none" stroke="#fff">
        <path d="m1147.500 22.500 5.500-5.500 5.500 5.500" strokeWidth="1.400" />
        <path d="M1169.500 17.500h2l3.500-3v11l-3.500-3h-2z" strokeWidth="1.200" />
        <path d="M1177 17.500c1 1.500 1 3.500 0 5M1179.500 15.500c2 3 2 6 0 9" strokeWidth="1.100" />
        <path d="M1182 13.500c3 4 3 9 0 13" stroke="#666" />
        <path d="M1197.500 26.500c0-6 5-11 11-11M1200.500 26.500c0-4.500 3.500-8 8-8" stroke="#888" />
        <path d="M1203.500 26.500c0-3 2-5 5-5" stroke="#eee" />
        <circle cx="1207" cy="25.500" r="1.600" fill="#fff" stroke="none" />
      </svg>
      <div className="flex items-center text-[12px] leading-none">
        <Fit w={23} className="ml-[7px]">ENG</Fit>
        <div className="ml-[9px] flex w-[60px] flex-col items-center gap-[6px]">
          <Fit w={42}>9:11 PM</Fit>
          <Fit w={58}>11/11/2018</Fit>
        </div>
      </div>
      <svg viewBox="0 0 16 17" className="ml-[14px] mt-[12px] h-[17px] w-[16px] shrink-0">
        <path d="M0 0h16v13h-5.500L8 16l-2.500-3H0z" fill="#fff" />
        <path d="M3 4h10M3 6.500h10M3 9.500h6" stroke="#101010" strokeWidth="1.100" />
      </svg>
      <div className="ml-auto mr-[4px] h-full w-px bg-[#555]" />
    </div>
  );
}

export default function App() {
  return (
    <div className="flex h-[768px] w-[1366px] flex-col overflow-hidden bg-[#e6e6e6] font-['Open_Sans',sans-serif] leading-none">
      <div className="bg-[#217346]">
        <TitleBar />
        <Tabs />
      </div>
      <Ribbon />
      <FormulaBar />
      <Sheet />
      <SheetTabs />
      <StatusBar />
      <Taskbar />
    </div>
  );
}
